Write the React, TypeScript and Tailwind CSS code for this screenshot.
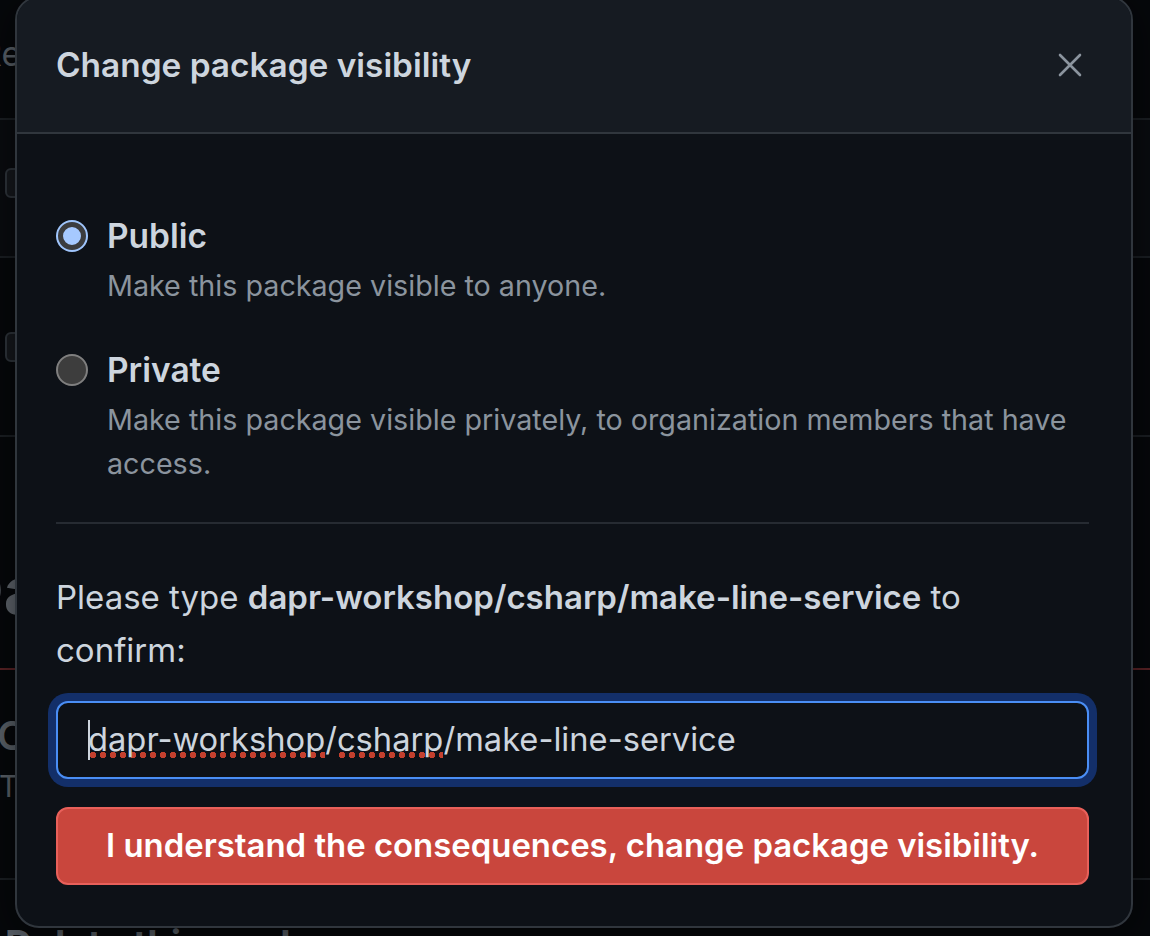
import React from "react"

const font = { fontFamily: "Inter, 'Noto Sans', sans-serif" }

function CloseIcon() {
  return (
    <svg width="24" height="24" viewBox="0 0 24 24" fill="none">
      <path d="M2 2L22 22M22 2L2 22" stroke="#8b949e" strokeWidth="2.6" strokeLinecap="round" />
    </svg>
  )
}

function Radio({ checked }: { checked: boolean }) {
  if (checked) {
    return (
      <div className="w-8 h-8 rounded-full bg-[#9fc5fc] p-[2px] shrink-0">
        <div className="w-full h-full rounded-full border-[5px] border-[#3b3c3e] bg-[#a6c9ff]" />
      </div>
    )
  }
  return <div className="w-8 h-8 rounded-full bg-[#3d3d3d] border-2 border-[#7f7f7f] shrink-0" />
}

interface OptionProps {
  checked: boolean
  label: string
  description: string
  className?: string
}

function Option({ checked, label, description, className }: OptionProps) {
  return (
    <label className={"flex gap-[19px] " + (className ?? "")}>
      <div className="h-[44px] flex items-center">
        <Radio checked={checked} />
      </div>
      <div className="flex-1 flex flex-col">
        <span className="text-[33.5px] leading-[44px] font-semibold text-[#cdd5de]">{label}</span>
        <span className="mt-[6px] text-[28.7px] leading-[44px] text-[#8b949e]">{description}</span>
      </div>
    </label>
  )
}

// fake spellcheck squiggle under the typed words
function Spell({ children }: { children: React.ReactNode }) {
  return (
    <span className="bg-[radial-gradient(circle,#c4402e_2.9px,transparent_3.4px)] bg-[length:10px_8px] bg-repeat-x bg-[position:0_calc(100%-0px)]">
      {children}
    </span>
  )
}

function Dialog() {
  return (
    <div className="absolute left-[15px] top-[-4px] w-[1118px] h-[932px] rounded-[24px] border-2 border-[#30363d] bg-[#0d1117] overflow-hidden flex flex-col shadow-[0_8px_40px_rgba(0,0,0,0.6)]">
      <header className="h-[136px] shrink-0 bg-[#161b22] border-b-2 border-[#30363d] flex items-center justify-between pl-[39px] pr-[49px]">
        <h1 className="text-[33.4px] font-semibold text-[#cdd5de]">Change package visibility</h1>
        <button type="button" aria-label="Close">
          <CloseIcon />
        </button>
      </header>

      <div className="flex flex-col pl-[39px] pr-[42px] pt-[80px]">
        <Option checked label="Public" description="Make this package visible to anyone." />
        <Option
          checked={false}
          label="Private"
          description="Make this package visible privately, to organization members that have access."
          className="mt-[40px]"
        />

        <div className="mt-[36px] h-[2px] bg-[#262b32]" />

        <p className="mt-[47px] text-[33px] leading-[53px] text-[#cdd5de]">
          Please type <b className="font-semibold">dapr-workshop/csharp/make-line-service</b> to confirm:
        </p>

        <div className="mt-[24px] h-[78px] rounded-[12px] border-2 border-[#4a8ef5] bg-[#0d1117] shadow-[0_0_0_8px_#132f69] flex items-center pl-[30px]">
          <span className="text-[32.7px] text-[#cdd5de] whitespace-nowrap">
            <span className="inline-block w-[2px] h-[40px] -mr-[2px] bg-[#cdd5de] align-[-9px]" />
            <Spell>dapr-workshop</Spell>/<Spell>csharp</Spell>/make-line-service
          </span>
        </div>

        <button
          type="button"
          className="mt-[28px] h-[78px] rounded-[12px] border-2 border-[#e8605a] bg-[#c9463d] text-white text-[32.9px] font-semibold"
        >
          I understand the consequences, change package visibility.
        </button>
      </div>
    </div>
  )
}

function Backdrop() {
  return (
    <div className="flex flex-col text-[#6e7681]">
      <div className="h-[120px] border-b-2 border-[#1b1f24] bg-[#06080b] pt-[28px]">
        <span className="-ml-[20px] text-[34px] text-[#5d646c]">Ref</span>
      </div>
      <div className="h-[138px] border-b-2 border-[#1b1f24] bg-[#0a0c10] pt-[48px]">
        <div className="ml-[5px] w-[40px] h-[30px] rounded-[6px] border-2 border-[#30363d] bg-[#16191e]" />
      </div>
      <div className="h-[179px] border-b-2 border-[#1b1f24] bg-[#06080b] pt-[74px]">
        <div className="ml-[5px] w-[40px] h-[30px] rounded-[6px] border-2 border-[#30363d] bg-[#16191e]" />
      </div>
      <div className="h-[231px] bg-[#06080b] pt-[104px]">
        <span className="-ml-[44px] text-[66px] font-bold text-[#646a72]">Da</span>
      </div>
      <div className="h-[212px] border-t-2 border-b-2 border-t-[#5c2326] border-b-[#1b1f24] bg-[#06080b] pt-[36px] flex flex-col">
        <span className="-ml-[3px] text-[40px] font-semibold text-[#5d646c] leading-[60px]">Ch</span>
        <span className="-ml-[1px] text-[30px] text-[#5d646c] leading-[40px]">Th</span>
      </div>
      <div className="h-[200px] bg-[#06080b] pt-[36px]">
        <span className="ml-[5px] text-[38px] font-bold text-[#5d646c]">Delete this package</span>
      </div>
    </div>
  )
}

export default function App() {
  return (
    <div className="relative w-[1150px] h-[936px] overflow-hidden bg-[#06080b]" style={font}>
      <Backdrop />
      <Dialog />
    </div>
  )
}
